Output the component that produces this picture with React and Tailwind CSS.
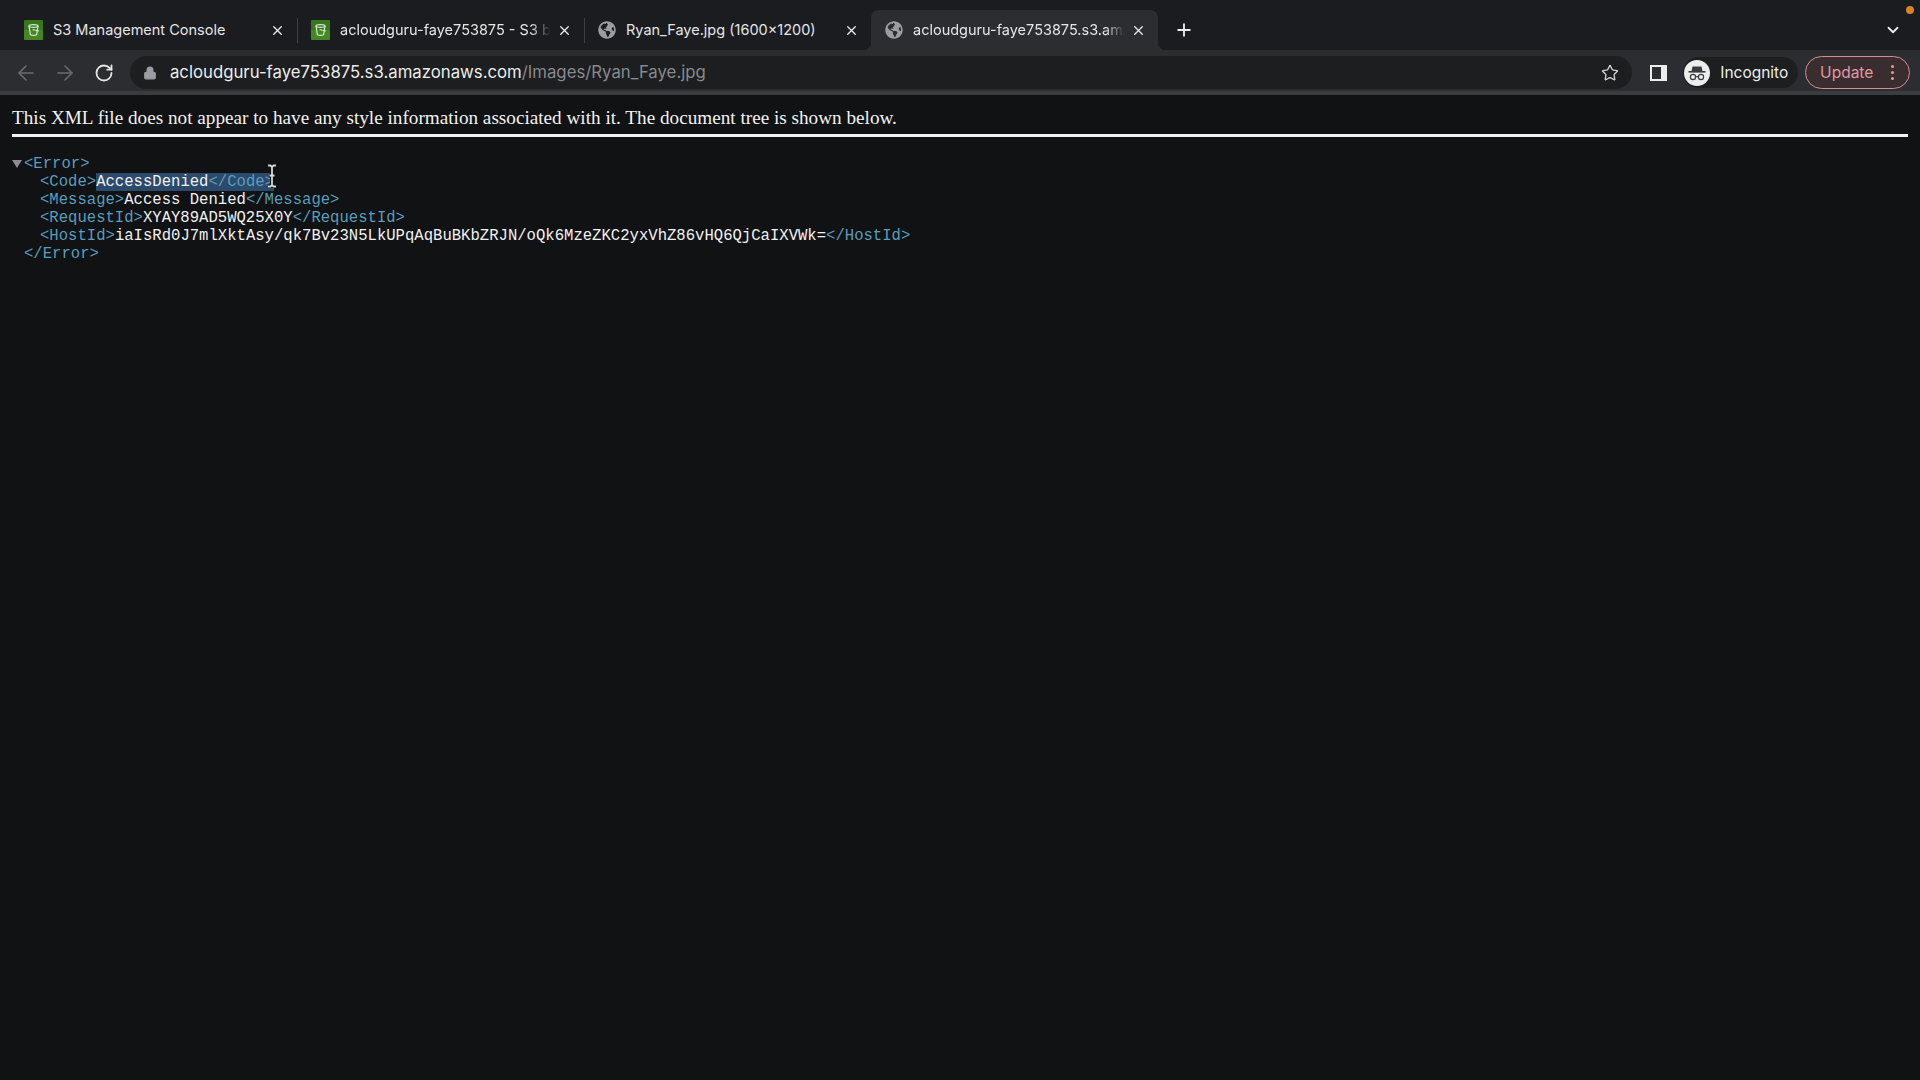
import { ArrowLeft, ArrowRight, RotateCw, Lock, Star, X, Plus, ChevronDown } from "lucide-react";
import { FaGlobeAmericas } from "react-icons/fa";

const S3Icon = () => (
  <svg width="19" height="20" viewBox="0 0 19 20" className="shrink-0">
    <rect width="19" height="20" rx="1" fill="#37781f" />
    <rect y="10" width="19" height="10" rx="1" fill="#4f9128" opacity="0.6" />
    <path d="M5 6 L6.4 14.8 Q9.5 16 12.6 14.8 L14 6" fill="none" stroke="#d9e8d0" strokeWidth="1.2" />
    <ellipse cx="9.5" cy="6" rx="4.6" ry="1.4" fill="none" stroke="#d9e8d0" strokeWidth="1.2" />
    <path d="M8.5 9.5 L15 11" stroke="#d9e8d0" strokeWidth="1.1" />
  </svg>
);

const IncognitoIcon = () => (
  <svg width="26" height="26" viewBox="0 0 26 26" className="shrink-0">
    <circle cx="13" cy="13" r="13" fill="#eceded" />
    <path d="M8.5 6.5 H17.5 L18.5 11 H7.5 Z" fill="#3a3b3d" />
    <rect x="4.5" y="11" width="17" height="1.6" fill="#3a3b3d" />
    <circle cx="9" cy="17" r="2.6" fill="none" stroke="#3a3b3d" strokeWidth="1.2" />
    <circle cx="17" cy="17" r="2.6" fill="none" stroke="#3a3b3d" strokeWidth="1.2" />
    <path d="M11.6 16.6 H14.4" stroke="#3a3b3d" strokeWidth="1.1" />
  </svg>
);

const Tab = ({ icon, title, active, fade }) => (
  <div className={`relative w-[287px] h-10 shrink-0 flex items-center pl-[14px] pr-[12px] ${active ? "bg-[#2b2d30] rounded-t-lg" : ""}`}>
    {active && (
      <>
        <div className="absolute left-[-8px] bottom-0 w-2 h-2 bg-[radial-gradient(circle_at_0_0,transparent_8px,#2b2d30_8.5px)]" />
        <div className="absolute right-[-8px] bottom-0 w-2 h-2 bg-[radial-gradient(circle_at_100%_0,transparent_8px,#2b2d30_8.5px)]" />
      </>
    )}
    {icon}
    <span
      className={`ml-[10px] mb-px flex-1 text-[14.5px] leading-[18px] overflow-hidden whitespace-nowrap text-[#e4e5e6] ${
        fade ? "[mask-image:linear-gradient(to_right,black_88%,transparent_97%)]" : ""
      }`}
    >
      {title}
    </span>
    <X size={15} strokeWidth={2.2} className="shrink-0 text-[#e8eaed]" />
  </div>
);

const Sep = () => <div className="w-px h-[25px] bg-[#3d3f42] shrink-0 -mr-px" />;

const Tag = ({ children }) => <span className="text-[#5a9dbd]">{children}</span>;

export default function App() {
  return (
    <div className="relative min-h-screen bg-[#111213] flex flex-col overflow-hidden font-['Inter',sans-serif]">
      {/* Tab strip */}
      <div className="h-[50px] bg-[#1b1c1f] flex items-end pl-[10px] relative">
        <div className="flex items-center">
          <Tab icon={<S3Icon />} title="S3 Management Console" />
          <Sep />
          <Tab icon={<S3Icon />} title="acloudguru-faye753875 - S3 bucket" fade />
          <Sep />
          <Tab icon={<FaGlobeAmericas size={18} className="shrink-0 text-[#9a9ea3]" />} title="Ryan_Faye.jpg (1600×1200)" />
          <Tab active icon={<FaGlobeAmericas size={18} className="shrink-0 text-[#9a9ea3]" />} title="acloudguru-faye753875.s3.amazonaws.com" fade />
        </div>
        <Plus size={20} strokeWidth={2.2} className="ml-[16px] mb-[10px] text-[#eceded]" />
        <div className="absolute right-[6px] top-[6px] w-2 h-2 rounded-full bg-[#d9822b]" />
        <ChevronDown size={18} strokeWidth={2.4} className="absolute right-[18px] top-[21px] text-[#eceded]" />
      </div>

      {/* Toolbar */}
      <div className="relative h-[45px] bg-[#2b2d30] flex items-center pl-[14px] pr-[10px]">
        <ArrowLeft size={24} strokeWidth={1.6} className="text-[#6a6d70]" />
        <ArrowRight size={24} strokeWidth={1.6} className="ml-[15px] text-[#6a6d70]" />
        <RotateCw size={20} strokeWidth={2.2} className="ml-[17px] text-[#e4e5e6]" />
        <div className="ml-[16px] w-[1504px] h-[33px] rounded-full bg-[#1c1e20] flex items-center pl-[13px] pr-[13px]">
          <Lock size={14} fill="#9a9ea3" strokeWidth={2} className="text-[#9a9ea3]" />
          <div className="ml-[13px] flex-1 text-[16.75px] leading-none whitespace-nowrap text-[#eceded]">
            acloudguru-faye753875.s3.amazonaws.com<span className="text-[#878a8e]">/Images/Ryan_Faye.jpg</span>
          </div>
          <Star size={18} strokeWidth={1.8} className="text-[#d2d3d5]" />
        </div>
        <div className="ml-[18px] w-[17px] h-[16px] border-2 border-[#eceded] border-r-[6px] shrink-0" />
        <div className="ml-[16px] w-[115px] h-[31px] rounded-full bg-[#1c1e20] flex items-center pl-px">
          <IncognitoIcon />
          <span className="ml-[10px] text-[15.5px] leading-none text-[#eceded]">Incognito</span>
        </div>
        <div className="ml-[7px] w-[105px] h-[33px] rounded-full border border-[#cf8f93] bg-[#3a2d30] flex items-center pl-[14px] text-[#e09a9f]">
          <span className="text-[15.5px] leading-none">Update</span>
          <div className="ml-[18px] flex flex-col gap-[3px]">
            <div className="w-[3px] h-[3px] rounded-full bg-[#e09a9f]" />
            <div className="w-[3px] h-[3px] rounded-full bg-[#e09a9f]" />
            <div className="w-[3px] h-[3px] rounded-full bg-[#e09a9f]" />
          </div>
        </div>
        <div className="absolute left-0 right-0 bottom-0 h-[4px] bg-[#3a3c3f]" />
      </div>

      {/* XML page */}
      <div className="flex-1 px-[12px]">
        <div className="pt-[12px] pb-[5px] border-b-[3px] border-[#f2f2f2] font-['Liberation_Serif',serif] text-[19.2px] leading-[22px] text-[#f2f2f2]">
          This XML file does not appear to have any style information associated with it. The document tree is shown below.
        </div>
        <div className="mt-[18px] relative font-['Liberation_Mono',monospace] text-[15.6px] leading-[18px] text-[#f0f1f2] whitespace-pre">
          <div className="flex items-center">
            <div className="w-0 h-0 border-x-[5px] border-x-transparent border-t-[8px] border-t-[#8a8c8f] mr-[2px]" />
            <Tag>{"<Error>"}</Tag>
          </div>
          <div className="pl-[28px]">
            <Tag>{"<Code>"}</Tag>
            <span className="bg-[#2c4a6c]">
              AccessDenied<Tag>{"</Code>"}</Tag>
            </span>
          </div>
          <div className="pl-[28px]">
            <Tag>{"<Message>"}</Tag>Access Denied<Tag>{"</Message>"}</Tag>
          </div>
          <div className="pl-[28px]">
            <Tag>{"<RequestId>"}</Tag>XYAY89AD5WQ25X0Y<Tag>{"</RequestId>"}</Tag>
          </div>
          <div className="pl-[28px]">
            <Tag>{"<HostId>"}</Tag>iaIsRd0J7mlXktAsy/qk7Bv23N5LkUPqAqBuBKbZRJN/oQk6MzeZKC2yxVhZ86vHQ6QjCaIXVWk=<Tag>{"</HostId>"}</Tag>
          </div>
          <div className="pl-[12px]">
            <Tag>{"</Error>"}</Tag>
          </div>
        </div>
      </div>

      {/* Text cursor */}
      <svg width="12" height="24" viewBox="0 0 12 24" className="absolute left-[266px] top-[164px]">
        <path d="M2 1.5 H4.5 L6 3 L7.5 1.5 H10 M6 3 V21 M2 22.5 H4.5 L6 21 L7.5 22.5 H10 M3.5 11.5 H8.5" fill="none" stroke="#111" strokeWidth="4" />
        <path d="M2 1.5 H4.5 L6 3 L7.5 1.5 H10 M6 3 V21 M2 22.5 H4.5 L6 21 L7.5 22.5 H10 M3.5 11.5 H8.5" fill="none" stroke="#d8d8d8" strokeWidth="1.8" />
      </svg>
    </div>
  );
}
